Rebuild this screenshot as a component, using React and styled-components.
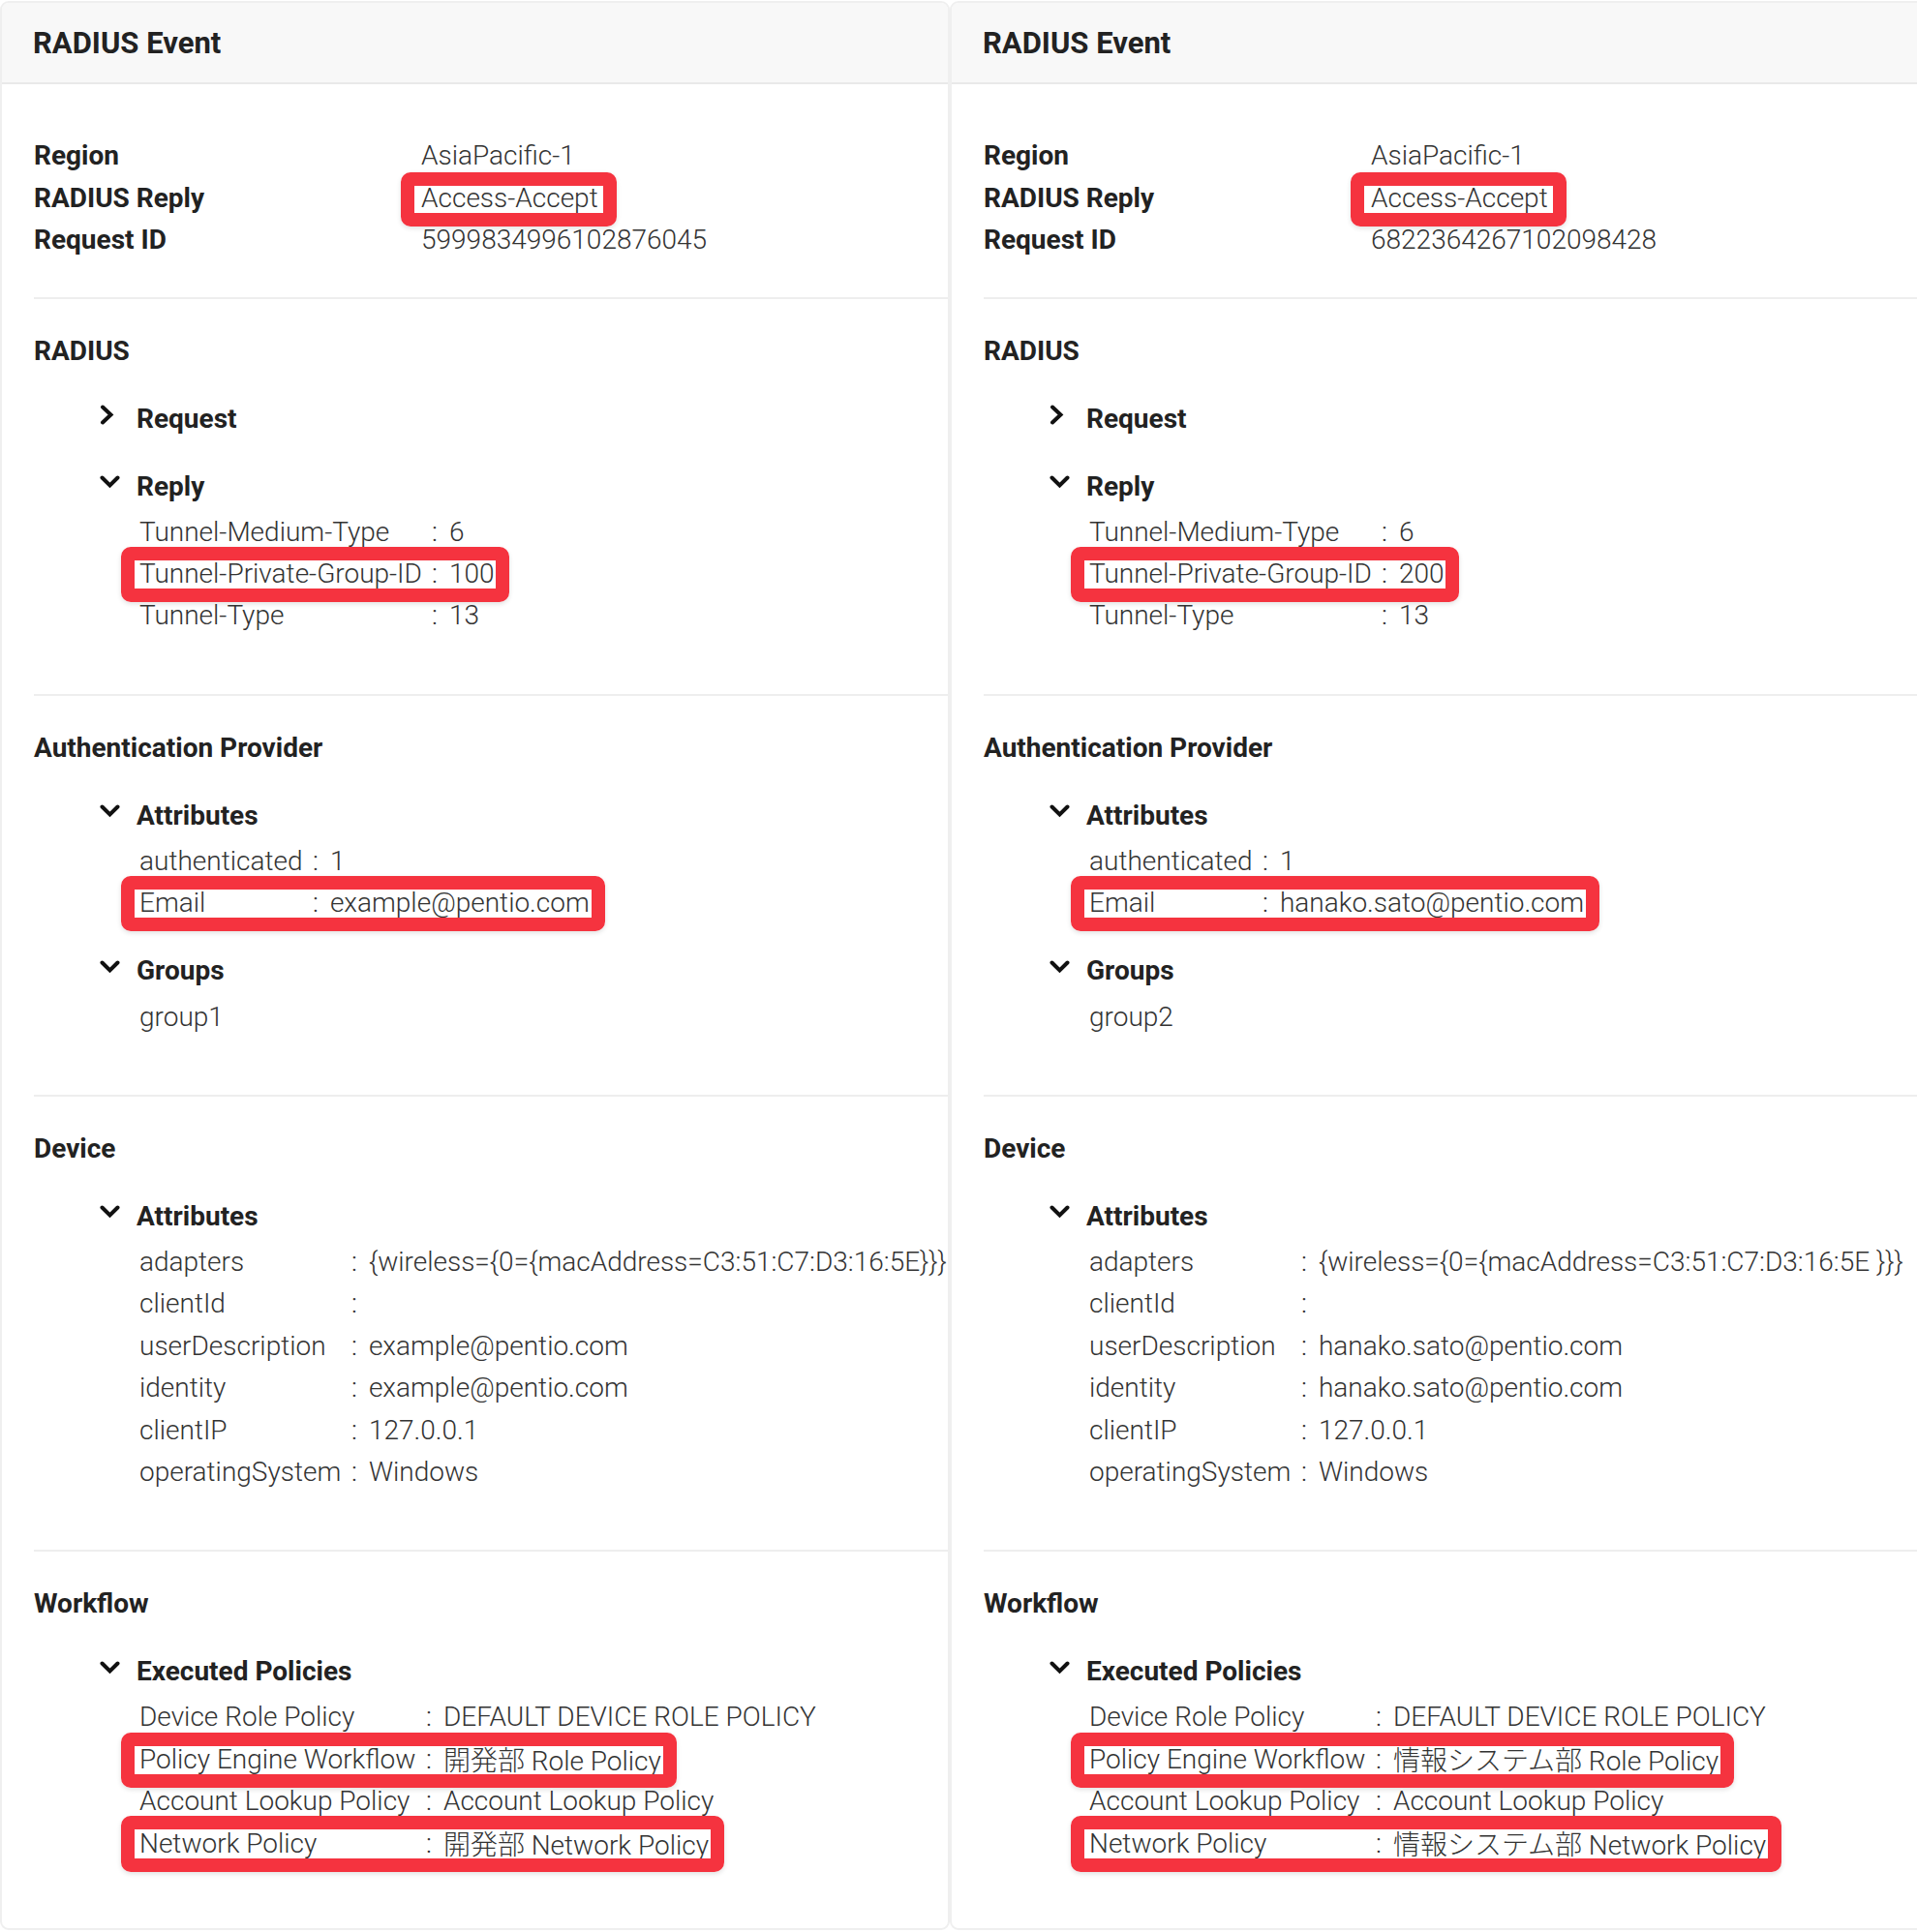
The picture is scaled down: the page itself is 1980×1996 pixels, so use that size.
import React from "react";
import styled, { createGlobalStyle } from "styled-components";

const GlobalStyle = createGlobalStyle`
  body {
    margin: 0;
    background: #ffffff;
    font-family: Roboto, "Noto Sans CJK JP", sans-serif;
    color: #333333;
  }
`;

const events = [
  {
    requestId: "5999834996102876045",
    tunnelId: "100",
    email: "example@pentio.com",
    group: "group1",
    mac: "{wireless={0={macAddress=C3:51:C7:D3:16:5E}}}",
    dept: "開発部",
  },
  {
    requestId: "6822364267102098428",
    tunnelId: "200",
    email: "hanako.sato@pentio.com",
    group: "group2",
    mac: "{wireless={0={macAddress=C3:51:C7:D3:16:5E }}}",
    dept: "情報システム部",
  },
];

function ChevronDown() {
  return (
    <Icon width="21" height="14" viewBox="0 0 21 14">
      <polyline points="2.5,2.5 10.5,10.5 18.5,2.5" />
    </Icon>
  );
}

function ChevronRight() {
  return (
    <Icon width="16" height="21" viewBox="0 0 16 21">
      <polyline points="3,2.5 11.5,10.5 3,18.5" />
    </Icon>
  );
}

function KeyValues({ rows, keyWidth }) {
  return (
    <Rows>
      {rows.map((row) => (
        <Row key={row[0]} $hl={row[2]}>
          <Key $w={keyWidth}>{row[0]}</Key>
          <Colon>:</Colon>
          <Value>{row[1]}</Value>
        </Row>
      ))}
    </Rows>
  );
}

function EventPanel({ ev, width }) {
  return (
    <Panel $w={width}>
      <Header>RADIUS Event</Header>
      <Body>
        <Summary>
          <InfoRow>
            <Label>Region</Label>
            <Value>AsiaPacific-1</Value>
          </InfoRow>
          <InfoRow>
            <Label>RADIUS Reply</Label>
            <HlValue>Access-Accept</HlValue>
          </InfoRow>
          <InfoRow>
            <Label>Request ID</Label>
            <Value>{ev.requestId}</Value>
          </InfoRow>
        </Summary>

        <Section>
          <Title>RADIUS</Title>
          <SubHead $collapsed>
            <IconBox>
              <ChevronRight />
            </IconBox>
            Request
          </SubHead>
          <SubHead>
            <IconBox>
              <ChevronDown />
            </IconBox>
            Reply
          </SubHead>
          <KeyValues
            keyWidth={292}
            rows={[
              ["Tunnel-Medium-Type", "6"],
              ["Tunnel-Private-Group-ID", ev.tunnelId, true],
              ["Tunnel-Type", "13"],
            ]}
          />
        </Section>

        <Section>
          <Title>Authentication Provider</Title>
          <SubHead>
            <IconBox>
              <ChevronDown />
            </IconBox>
            Attributes
          </SubHead>
          <KeyValues
            keyWidth={169}
            rows={[
              ["authenticated", "1"],
              ["Email", ev.email, true],
            ]}
          />
          <SubHead>
            <IconBox>
              <ChevronDown />
            </IconBox>
            Groups
          </SubHead>
          <Rows>
            <Row>
              <Value>{ev.group}</Value>
            </Row>
          </Rows>
        </Section>

        <Section>
          <Title>Device</Title>
          <SubHead>
            <IconBox>
              <ChevronDown />
            </IconBox>
            Attributes
          </SubHead>
          <KeyValues
            keyWidth={209}
            rows={[
              ["adapters", ev.mac],
              ["clientId", ""],
              ["userDescription", ev.email],
              ["identity", ev.email],
              ["clientIP", "127.0.0.1"],
              ["operatingSystem", "Windows"],
            ]}
          />
        </Section>

        <Section $last>
          <Title>Workflow</Title>
          <SubHead>
            <IconBox>
              <ChevronDown />
            </IconBox>
            Executed Policies
          </SubHead>
          <KeyValues
            keyWidth={286}
            rows={[
              ["Device Role Policy", "DEFAULT DEVICE ROLE POLICY"],
              ["Policy Engine Workflow", `${ev.dept} Role Policy`, true],
              ["Account Lookup Policy", "Account Lookup Policy"],
              ["Network Policy", `${ev.dept} Network Policy`, true],
            ]}
          />
        </Section>
      </Body>
    </Panel>
  );
}

export default function App() {
  return (
    <>
      <GlobalStyle />
      <Page>
        <EventPanel ev={events[0]} width={981} />
        <EventPanel ev={events[1]} width={1012} />
      </Page>
    </>
  );
}

const Page = styled.div`
  display: flex;
  align-items: flex-start;
  width: 1980px;
  height: 1996px;
  padding-top: 1px;
  box-sizing: border-box;
  overflow: hidden;
`;

const Panel = styled.section`
  flex: 0 0 ${(p) => p.$w}px;
  height: 1993px;
  box-sizing: border-box;
  border: 2px solid #efefef;
  border-radius: 9px;
  overflow: hidden;
  background: #ffffff;
`;

const Header = styled.div`
  display: flex;
  align-items: center;
  height: 84px;
  box-sizing: border-box;
  padding-left: 32px;
  background: #f8f8f8;
  border-bottom: 2px solid #e9e9e9;
  font-size: 31px;
  font-weight: 700;
  color: #222222;
`;

const Body = styled.div`
  padding-left: 33px;
`;

const Summary = styled.div`
  padding: 52px 0 37px;
`;

const InfoRow = styled.div`
  display: flex;
  align-items: center;
  height: 43.5px;
  font-size: 28px;
`;

const Label = styled.div`
  width: 400px;
  flex: none;
  font-weight: 700;
  color: #222222;
`;

const Section = styled.div`
  border-top: 2px solid #eeeeee;
  padding: 32px 0 ${(p) => (p.$last ? 0 : 59)}px;
`;

const Title = styled.div`
  height: 43px;
  line-height: 43px;
  font-size: 28px;
  font-weight: 700;
  color: #222222;
`;

const SubHead = styled.div`
  display: flex;
  align-items: center;
  height: 43px;
  margin-top: 27px;
  margin-bottom: ${(p) => (p.$collapsed ? 4 : 0)}px;
  padding-left: 68px;
  font-size: 28px;
  font-weight: 700;
  color: #222222;
`;

const IconBox = styled.span`
  display: flex;
  align-items: center;
  width: 38px;
  height: 43px;
  margin-top: -8px;
`;

const Icon = styled.svg`
  fill: none;
  stroke: #111111;
  stroke-width: 4;
  stroke-linejoin: miter;
  stroke-linecap: round;
`;

const Rows = styled.div`
  display: flex;
  flex-direction: column;
  align-items: flex-start;
  margin-top: 4px;
  padding-left: 109px;
`;

const Row = styled.div`
  position: relative;
  display: flex;
  align-items: center;
  height: 43.4px;
  font-size: 28px;
  white-space: nowrap;

  ${(p) =>
    p.$hl &&
    `
    &::before {
      content: "";
      position: absolute;
      left: -19px;
      right: -16px;
      top: -6px;
      bottom: -8px;
      border: 14px solid #f5333f;
      border-radius: 10px;
      box-shadow: 0 2px 5px rgba(0, 0, 0, 0.12);
      pointer-events: none;
    }
  `}
`;

const Key = styled.span`
  min-width: ${(p) => p.$w}px;
  font-weight: 300;
  color: #333333;
`;

const Colon = styled.span`
  margin: 0 12px 0 10px;
  font-weight: 300;
  color: #333333;
`;

const Value = styled.span`
  font-weight: 300;
  color: #333333;
  white-space: nowrap;
`;

const HlValue = styled(Value)`
  position: relative;

  &::before {
    content: "";
    position: absolute;
    left: -21px;
    right: -19px;
    top: -10px;
    bottom: -13px;
    border: 14px solid #f5333f;
    border-radius: 10px;
    box-shadow: 0 2px 5px rgba(0, 0, 0, 0.12);
    pointer-events: none;
  }
`;
